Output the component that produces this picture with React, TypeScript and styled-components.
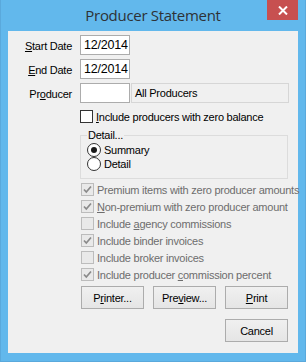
import React from 'react';
import styled, { createGlobalStyle } from 'styled-components';

const GlobalStyle = createGlobalStyle`
  html, body {
    margin: 0;
    padding: 0;
    background: #ffffff;
  }
  * {
    box-sizing: border-box;
  }
`;

const Window = styled.div`
  width: 306px;
  height: 362px;
  background: #62b8ec;
  border: 1px solid #5aa9dc;
  border-top: none;
  padding: 0 7px 8px 7px;
  display: flex;
  flex-direction: column;
  font-family: 'Liberation Sans', Arial, sans-serif;
  font-size: 11px;
  letter-spacing: -0.25px;
  color: #000000;
`;

const TitleBar = styled.div`
  height: 31px;
  display: grid;
  grid-template-columns: 1fr auto 1fr;
  align-items: start;
`;

const Title = styled.div`
  grid-column: 2;
  font-family: 'Open Sans', sans-serif;
  font-size: 15px;
  line-height: 30px;
  color: #2e3236;
  letter-spacing: -0.3px;
  white-space: nowrap;
`;

const CloseButton = styled.div`
  grid-column: 3;
  justify-self: end;
  width: 31px;
  height: 20px;
  background: #c75050;
  display: flex;
  align-items: center;
  justify-content: center;
`;

const Client = styled.div`
  flex: 1;
  background: #f0f0f0;
  padding-top: 4px;
  display: flex;
  flex-direction: column;
`;

const FieldGrid = styled.div`
  display: grid;
  grid-template-columns: 71px 50px 158px;
  grid-auto-rows: 20px;
  row-gap: 4px;
  column-gap: 1px;
`;

const Label = styled.div`
  text-align: right;
  padding-right: 7px;
  line-height: 22px;
  white-space: nowrap;
`;

const Key = styled.span`
  text-decoration: underline;
  text-underline-offset: 1px;
`;

const TextBox = styled.div`
  background: #ffffff;
  border: 1px solid #acacac;
  font-size: 12.5px;
  line-height: 18px;
  padding-left: 3px;
  letter-spacing: -0.2px;
  white-space: nowrap;
`;

const ReadOnlyBox = styled.div`
  background: #f0f0f0;
  border: 1px solid #d6d6d6;
  font-size: 11px;
  line-height: 18px;
  padding-left: 3px;
  white-space: nowrap;
`;

const CheckRow = styled.div<{ $indent: number; $disabled?: boolean }>`
  height: 17px;
  display: flex;
  align-items: center;
  gap: 3px;
  padding-left: ${(p) => p.$indent}px;
  color: ${(p) => (p.$disabled ? '#6d6d6d' : '#000000')};
  white-space: nowrap;
`;

const Box = styled.span<{ $disabled?: boolean }>`
  flex: none;
  width: 13px;
  height: 13px;
  border: 1px solid ${(p) => (p.$disabled ? '#bcbcbc' : '#333333')};
  background: ${(p) => (p.$disabled ? '#e9e9e9' : '#ffffff')};
  display: flex;
  align-items: center;
  justify-content: center;
`;

const FirstCheck = styled(CheckRow)`
  margin-top: 5px;
`;

const Group = styled.fieldset`
  margin: 4px 10px 0 72px;
  padding: 1px 0 7px 6px;
  border: 1px solid #dcdcdc;
  min-width: 0;
`;

const Legend = styled.legend`
  padding: 0 1px;
  line-height: 13px;
  font-size: 11px;
`;

const RadioRow = styled.div`
  height: 14px;
  display: flex;
  align-items: center;
  gap: 3px;
`;

const RadioCircle = styled.span<{ $on?: boolean }>`
  flex: none;
  width: 14px;
  height: 14px;
  border-radius: 50%;
  border: 1px solid #333333;
  background: #ffffff;
  display: flex;
  align-items: center;
  justify-content: center;

  &::after {
    content: '';
    width: 6px;
    height: 6px;
    border-radius: 50%;
    background: ${(p) => (p.$on ? '#1a1a1a' : 'transparent')};
  }
`;

const Options = styled.div`
  margin-top: 2px;
  display: flex;
  flex-direction: column;
`;

const ButtonRow = styled.div`
  display: flex;
  justify-content: flex-end;
  gap: 9px;
  padding-right: 10px;
  margin-top: 3px;
`;

const Button = styled.div`
  width: 63px;
  height: 23px;
  border: 1px solid #acacac;
  background: linear-gradient(#f0f0f0, #e5e5e5);
  display: flex;
  align-items: center;
  justify-content: center;
  font-size: 11px;
`;

const CancelRow = styled(ButtonRow)`
  margin-top: 10px;
`;

function Tick({ color }: { color: string }) {
  return (
    <svg width="9" height="9" viewBox="0 0 9 9">
      <path d="M1 4.5 L3.3 7 L8 1.5" fill="none" stroke={color} strokeWidth="1.7" />
    </svg>
  );
}

function Check({
  checked,
  disabled,
  children,
}: {
  checked?: boolean;
  disabled?: boolean;
  children: React.ReactNode;
}) {
  return (
    <CheckRow $indent={73} $disabled={disabled}>
      <Box $disabled={disabled}>{checked && <Tick color="#8a8a8a" />}</Box>
      <span>{children}</span>
    </CheckRow>
  );
}

export default function App() {
  return (
    <>
      <GlobalStyle />
      <Window>
        <TitleBar>
          <Title>Producer Statement</Title>
          <CloseButton>
            <svg width="10" height="9" viewBox="0 0 10 9">
              <path d="M1 0.5 L9 8.5 M9 0.5 L1 8.5" stroke="#ffffff" strokeWidth="2" />
            </svg>
          </CloseButton>
        </TitleBar>

        <Client>
          <FieldGrid>
            <Label>
              <Key>S</Key>tart Date
            </Label>
            <TextBox>12/2014</TextBox>
            <div />

            <Label>
              <Key>E</Key>nd Date
            </Label>
            <TextBox>12/2014</TextBox>
            <div />

            <Label>
              Pr<Key>o</Key>ducer
            </Label>
            <TextBox />
            <ReadOnlyBox>All Producers</ReadOnlyBox>
          </FieldGrid>

          <FirstCheck $indent={72}>
            <Box />
            <span>
              <Key>I</Key>nclude producers with zero balance
            </span>
          </FirstCheck>

          <Group>
            <Legend>Detail...</Legend>
            <RadioRow>
              <RadioCircle $on />
              <span>Summary</span>
            </RadioRow>
            <RadioRow>
              <RadioCircle />
              <span>Detail</span>
            </RadioRow>
          </Group>

          <Options>
            <Check checked disabled>
              Premium items with zero producer amounts
            </Check>
            <Check checked disabled>
              <Key>N</Key>on-premium with zero producer amount
            </Check>
            <Check disabled>
              Include <Key>a</Key>gency commissions
            </Check>
            <Check checked disabled>
              Include binder invoices
            </Check>
            <Check disabled>Include broker invoices</Check>
            <Check checked disabled>
              Include producer <Key>c</Key>ommission percent
            </Check>
          </Options>

          <ButtonRow>
            <Button>
              P<Key>r</Key>inter...
            </Button>
            <Button>
              Pre<Key>v</Key>iew...
            </Button>
            <Button>
              <Key>P</Key>rint
            </Button>
          </ButtonRow>
          <CancelRow>
            <Button>Cancel</Button>
          </CancelRow>
        </Client>
      </Window>
    </>
  );
}
